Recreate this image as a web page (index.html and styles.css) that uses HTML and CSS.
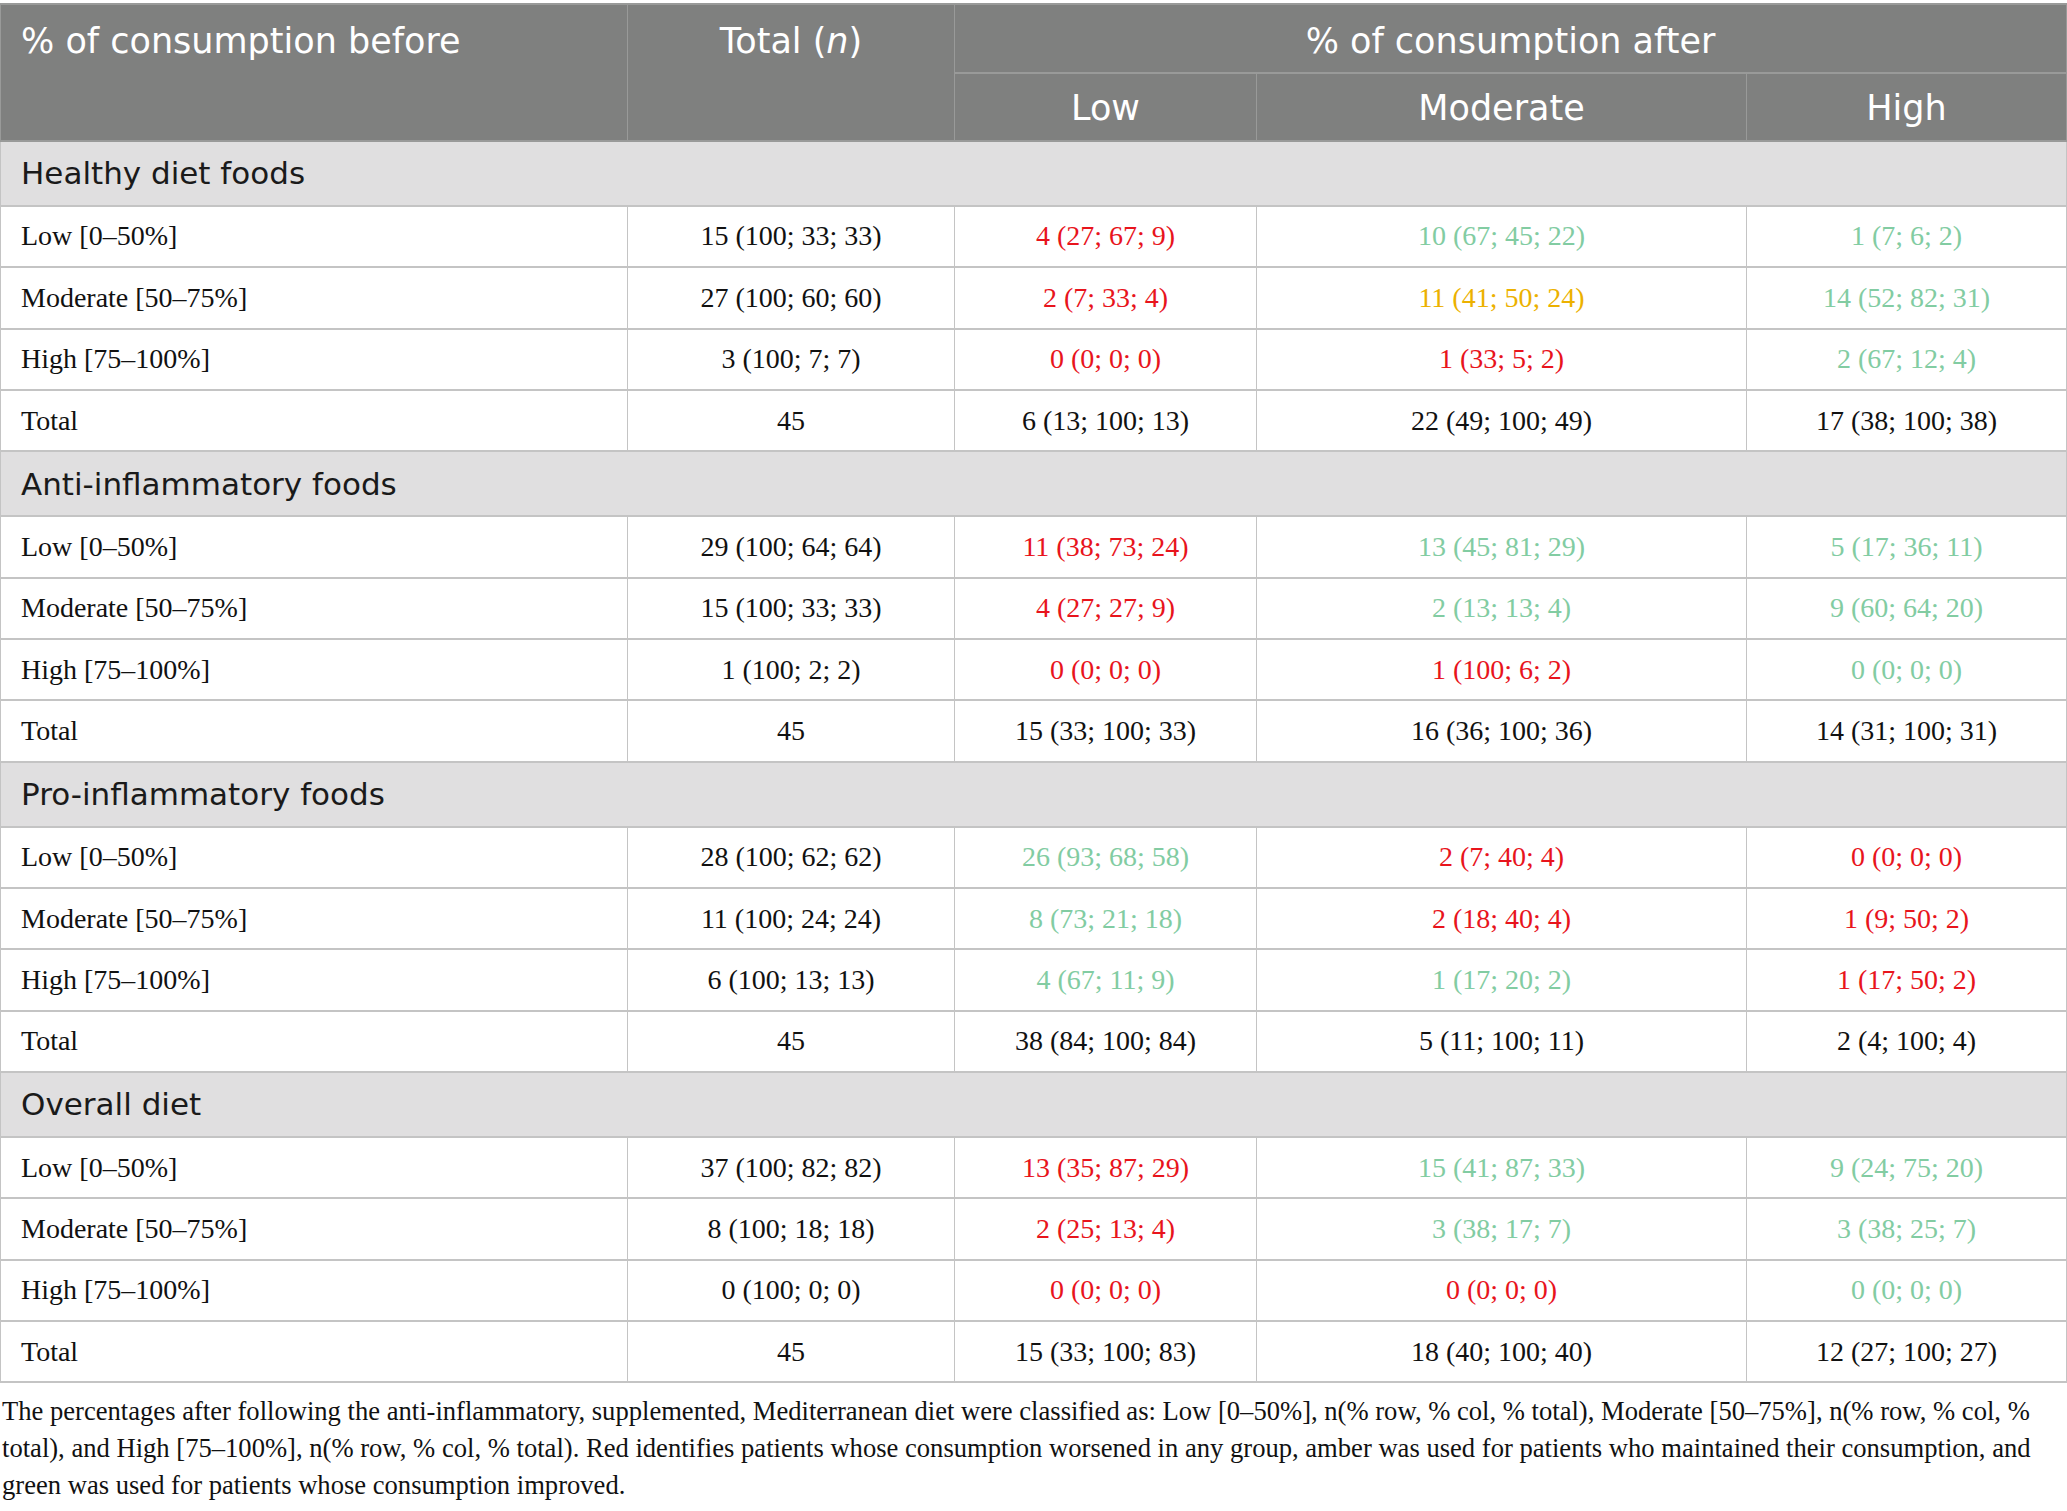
FILE: index.html
```html
<!DOCTYPE html>
<html lang="en">
<head>
    <meta charset="UTF-8">
    <title>Consumption before and after diet</title>
    <link rel="stylesheet" href="styles.css">
</head>
<body>
    <table class="diet-table">
        <colgroup>
            <col class="col-label">
            <col class="col-total">
            <col class="col-low">
            <col class="col-mod">
            <col class="col-high">
        </colgroup>
        <thead>
            <tr class="head-top">
                <th rowspan="2" class="left">% of consumption before</th>
                <th rowspan="2">Total (<i>n</i>)</th>
                <th colspan="3">% of consumption after</th>
            </tr>
            <tr class="head-sub">
                <th>Low</th>
                <th>Moderate</th>
                <th>High</th>
            </tr>
        </thead>
        <tbody>
            <tr class="section"><td colspan="5">Healthy diet foods</td></tr>
            <tr><td class="left">Low [0–50%]</td><td>15 (100; 33; 33)</td><td class="red">4 (27; 67; 9)</td><td class="green">10 (67; 45; 22)</td><td class="green">1 (7; 6; 2)</td></tr>
            <tr><td class="left">Moderate [50–75%]</td><td>27 (100; 60; 60)</td><td class="red">2 (7; 33; 4)</td><td class="amber">11 (41; 50; 24)</td><td class="green">14 (52; 82; 31)</td></tr>
            <tr><td class="left">High [75–100%]</td><td>3 (100; 7; 7)</td><td class="red">0 (0; 0; 0)</td><td class="red">1 (33; 5; 2)</td><td class="green">2 (67; 12; 4)</td></tr>
            <tr><td class="left">Total</td><td>45</td><td>6 (13; 100; 13)</td><td>22 (49; 100; 49)</td><td>17 (38; 100; 38)</td></tr>

            <tr class="section"><td colspan="5">Anti-inflammatory foods</td></tr>
            <tr><td class="left">Low [0–50%]</td><td>29 (100; 64; 64)</td><td class="red">11 (38; 73; 24)</td><td class="green">13 (45; 81; 29)</td><td class="green">5 (17; 36; 11)</td></tr>
            <tr><td class="left">Moderate [50–75%]</td><td>15 (100; 33; 33)</td><td class="red">4 (27; 27; 9)</td><td class="green">2 (13; 13; 4)</td><td class="green">9 (60; 64; 20)</td></tr>
            <tr><td class="left">High [75–100%]</td><td>1 (100; 2; 2)</td><td class="red">0 (0; 0; 0)</td><td class="red">1 (100; 6; 2)</td><td class="green">0 (0; 0; 0)</td></tr>
            <tr><td class="left">Total</td><td>45</td><td>15 (33; 100; 33)</td><td>16 (36; 100; 36)</td><td>14 (31; 100; 31)</td></tr>

            <tr class="section"><td colspan="5">Pro-inflammatory foods</td></tr>
            <tr><td class="left">Low [0–50%]</td><td>28 (100; 62; 62)</td><td class="green">26 (93; 68; 58)</td><td class="red">2 (7; 40; 4)</td><td class="red">0 (0; 0; 0)</td></tr>
            <tr><td class="left">Moderate [50–75%]</td><td>11 (100; 24; 24)</td><td class="green">8 (73; 21; 18)</td><td class="red">2 (18; 40; 4)</td><td class="red">1 (9; 50; 2)</td></tr>
            <tr><td class="left">High [75–100%]</td><td>6 (100; 13; 13)</td><td class="green">4 (67; 11; 9)</td><td class="green">1 (17; 20; 2)</td><td class="red">1 (17; 50; 2)</td></tr>
            <tr><td class="left">Total</td><td>45</td><td>38 (84; 100; 84)</td><td>5 (11; 100; 11)</td><td>2 (4; 100; 4)</td></tr>

            <tr class="section"><td colspan="5">Overall diet</td></tr>
            <tr><td class="left">Low [0–50%]</td><td>37 (100; 82; 82)</td><td class="red">13 (35; 87; 29)</td><td class="green">15 (41; 87; 33)</td><td class="green">9 (24; 75; 20)</td></tr>
            <tr><td class="left">Moderate [50–75%]</td><td>8 (100; 18; 18)</td><td class="red">2 (25; 13; 4)</td><td class="green">3 (38; 17; 7)</td><td class="green">3 (38; 25; 7)</td></tr>
            <tr><td class="left">High [75–100%]</td><td>0 (100; 0; 0)</td><td class="red">0 (0; 0; 0)</td><td class="red">0 (0; 0; 0)</td><td class="green">0 (0; 0; 0)</td></tr>
            <tr><td class="left">Total</td><td>45</td><td>15 (33; 100; 83)</td><td>18 (40; 100; 40)</td><td>12 (27; 100; 27)</td></tr>
        </tbody>
    </table>

    <p class="note">The percentages after following the anti-inflammatory, supplemented, Mediterranean diet were classified as: Low [0–50%], n(% row, % col, % total), Moderate [50–75%], n(% row, % col, % total), and High [75–100%], n(% row, % col, % total). Red identifies patients whose consumption worsened in any group, amber was used for patients who maintained their consumption, and green was used for patients whose consumption improved.</p>
</body>
</html>
```

FILE: styles.css
```css
/* Page */
body {
    margin: 0;
    padding-top: 3px;
    background: #fff;
    color: #111;
    font-family: 'Liberation Serif', 'Times New Roman', serif;
}

/* Table */
.diet-table {
    width: 2066px;
    border-collapse: collapse;
    table-layout: fixed;
}

.col-label { width: 627px; }
.col-total { width: 327px; }
.col-low { width: 302px; }
.col-mod { width: 490px; }
.col-high { width: 320px; }

.diet-table th,
.diet-table td {
    border-left: 1px solid #c4c4c4;
    border-right: 1px solid #c4c4c4;
    border-top: 2px solid #c4c4c4;
    border-bottom: 2px solid #c4c4c4;
    padding: 0 20px;
    text-align: center;
}

/* Header */
.diet-table th {
    background: #7f807f;
    color: #fff;
    font-family: 'DejaVu Sans', 'Liberation Sans', sans-serif;
    font-weight: normal;
    font-size: 35px;
    border-color: #999a99;
}

.diet-table th i {
    font-style: oblique;
}

.head-top th {
    height: 62px;
    padding-top: 5px;
    vertical-align: middle;
}

.head-top th[rowspan] {
    vertical-align: top;
    padding-top: 16px;
}

.head-sub th {
    height: 64px;
    padding-top: 2px;
}

.diet-table th.left,
.diet-table td.left {
    text-align: left;
}

/* Data rows */
.diet-table td {
    font-size: 28px;
    height: 59.4px;
}

/* Section rows */
.diet-table .section td {
    background: #e0dfe0;
    font-family: 'DejaVu Sans', 'Liberation Sans', sans-serif;
    font-size: 31px;
    color: #1a1a1a;
    text-align: left;
    height: 62.8px;
}

.red { color: #e8141c; }
.green { color: #82cca2; }
.amber { color: #ecb100; }

/* Footnote */
.note {
    margin: 10px 0 0;
    padding-left: 2px;
    width: 2064px;
    font-size: 26.6px;
    line-height: 37px;
    color: #111;
}
```
